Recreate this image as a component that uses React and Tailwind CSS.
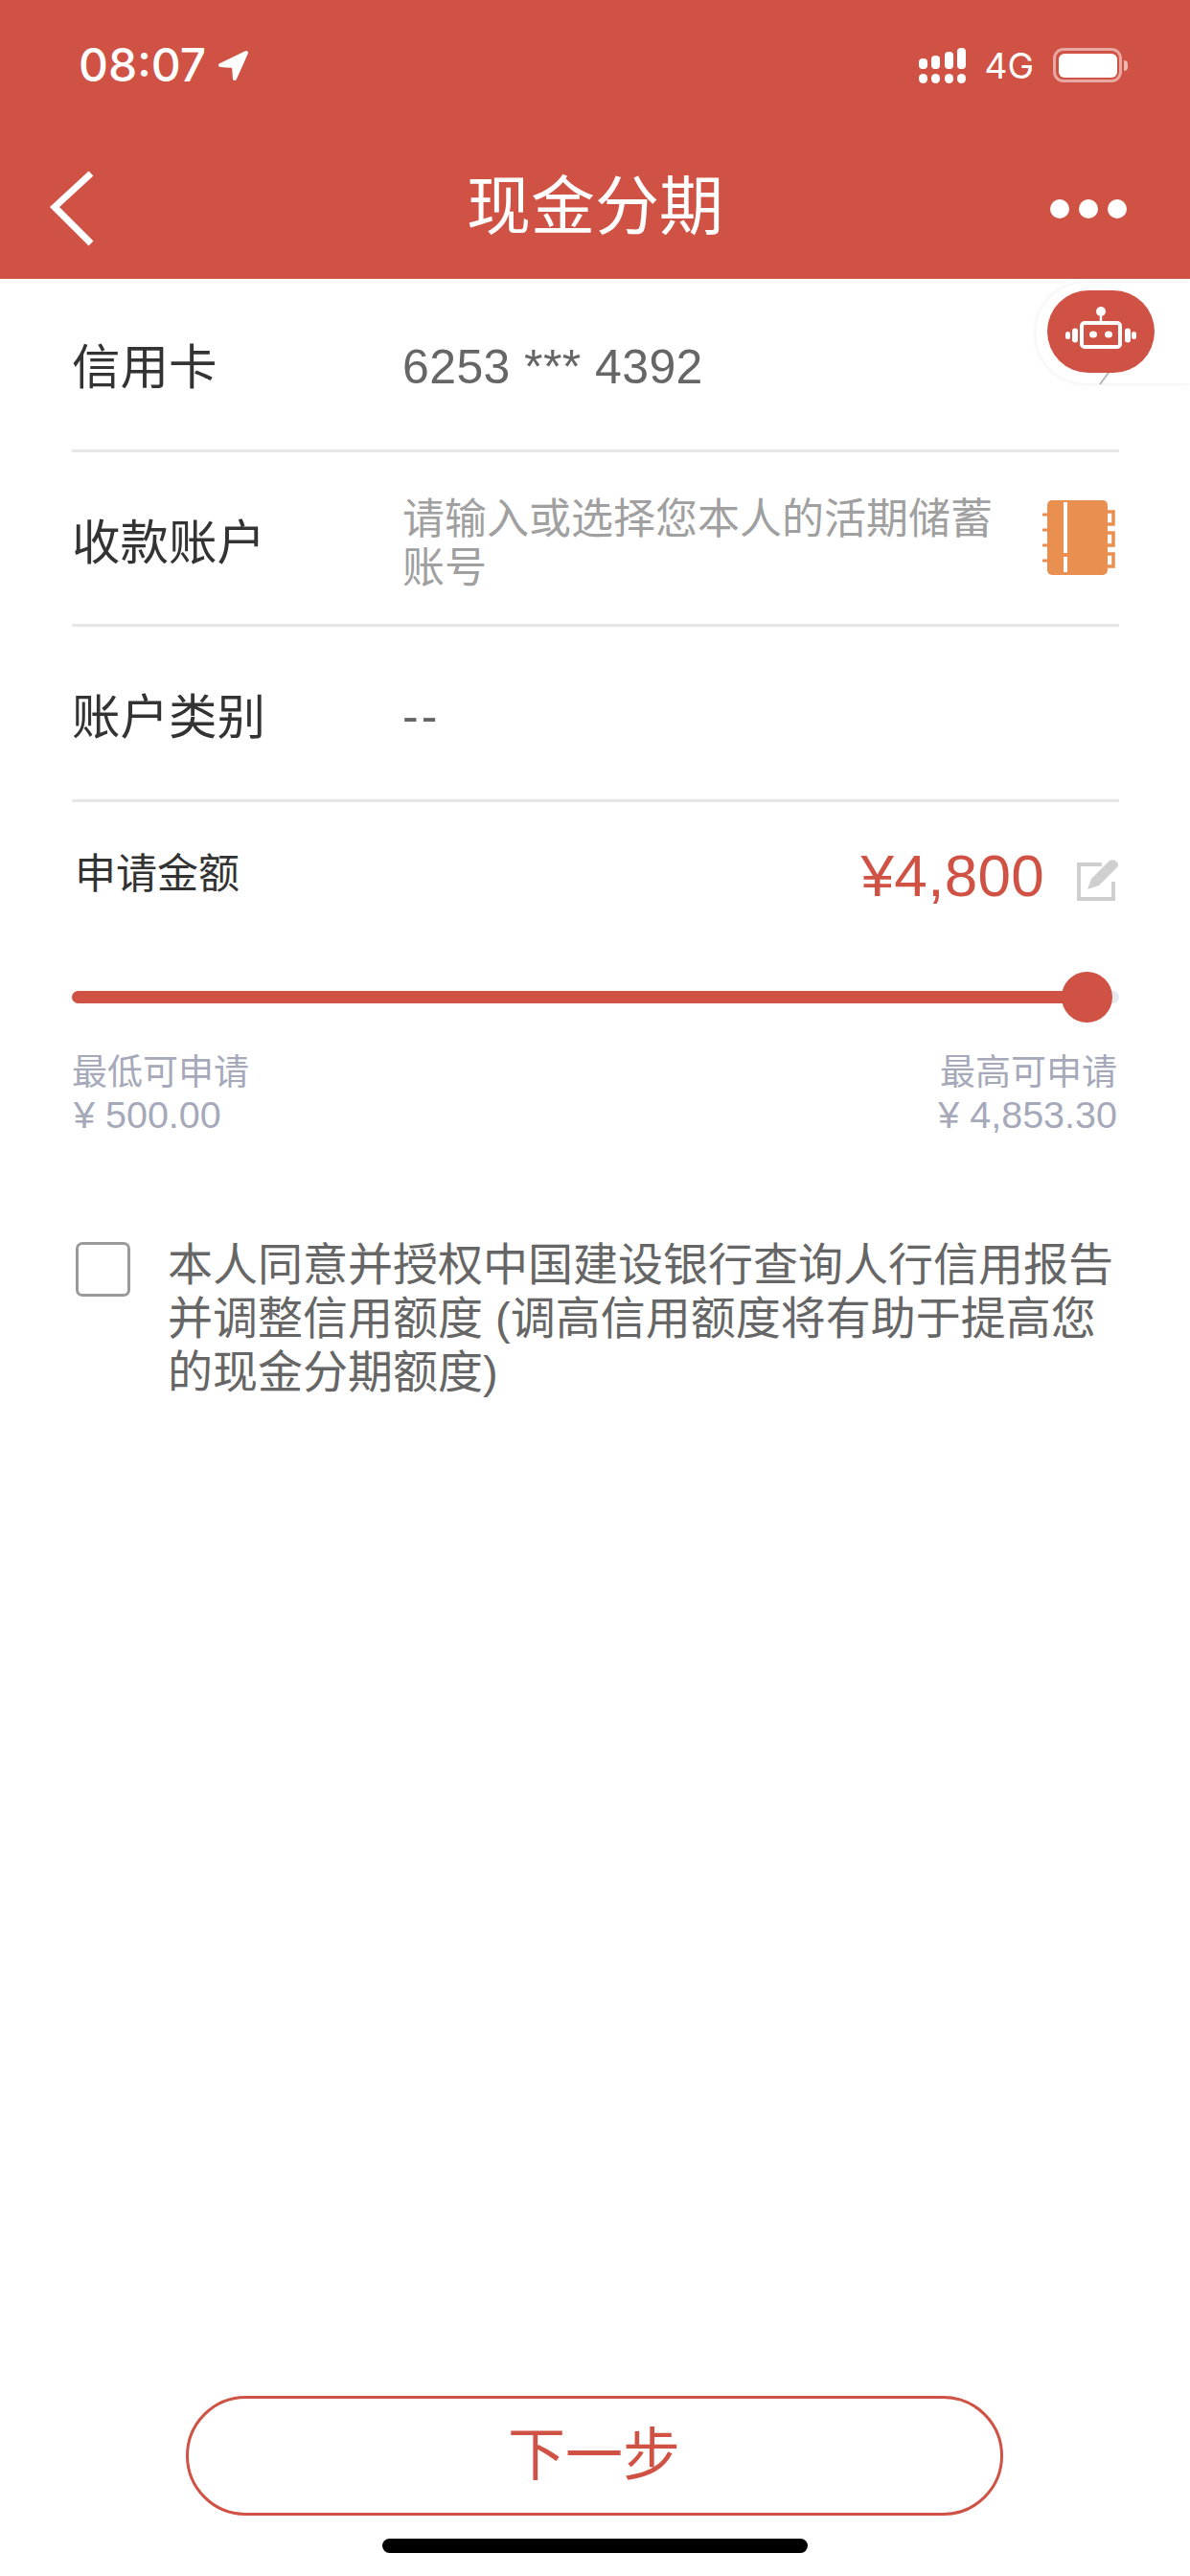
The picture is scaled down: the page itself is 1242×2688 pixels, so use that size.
const cjk = { fontFamily: '"Liberation Sans","Noto Sans CJK SC",sans-serif' };

function Signal() {
  const tops = [11, 14, 18, 22];
  return (
    <div className="flex items-end gap-[4.5px]">
      {tops.map((h, i) => (
        <div key={i} className="flex w-[9px] flex-col gap-[5px]">
          <div className="rounded-[4px] bg-white" style={{ height: h }} />
          <div className="h-[10px] rounded-full bg-white" />
        </div>
      ))}
    </div>
  );
}

function Battery() {
  return (
    <div className="flex items-center gap-[2px]">
      <div className="flex h-[36px] w-[72px] items-center justify-center rounded-[11px] border-[3px] border-white/50">
        <div className="h-[25px] w-[61px] rounded-[6px] bg-white" />
      </div>
      <div className="h-[11px] w-[4px] rounded-r-full bg-white/60" />
    </div>
  );
}

function Row({ label, children, right, h, labelClass, valueClass }) {
  return (
    <div className={`flex items-center border-b-[3px] border-[#e6e6e6] ${h}`}>
      <div className={`w-[345px] shrink-0 text-[50.5px] leading-none text-[#333333] ${labelClass}`}>{label}</div>
      <div className={`min-w-0 flex-1 ${valueClass}`}>{children}</div>
      {right}
    </div>
  );
}

function Robot() {
  return (
    <svg width="78" height="52" viewBox="0 0 78 52" fill="none" className="block">
      <circle cx="39" cy="5" r="5" fill="#fff" />
      <path d="M39 9v7" stroke="#fff" strokeWidth="2.5" />
      <rect x="19" y="17" width="40" height="25" rx="3" stroke="#fff" strokeWidth="4" />
      <ellipse cx="31" cy="29" rx="4" ry="3.5" fill="#fff" />
      <ellipse cx="47" cy="29" rx="4" ry="3.5" fill="#fff" />
      <rect x="9" y="22.5" width="6" height="15" rx="3" fill="#fff" />
      <rect x="2" y="26" width="5" height="8" rx="2.5" fill="#fff" />
      <rect x="64" y="22.5" width="6" height="15" rx="3" fill="#fff" />
      <rect x="71" y="26" width="5" height="8" rx="2.5" fill="#fff" />
    </svg>
  );
}

function Book() {
  return (
    <svg width="76" height="79" viewBox="0 0 76 79" fill="none" className="mr-[4px] block shrink-0">
      <rect x="5" y="0" width="63" height="78" rx="5" fill="#e98f50" />
      <path d="M24 2v53M24 59v16" stroke="#fff" strokeWidth="4" />
      <path d="M0 15h6M0 31h6M0 47h6M0 63h6" stroke="#e98f50" strokeWidth="3" />
      <path d="M68 12h6v13h-6M68 34h6v13h-6M68 56h6v13h-6" stroke="#e98f50" strokeWidth="3.5" />
    </svg>
  );
}

function EditIcon() {
  return (
    <svg width="44" height="44" viewBox="0 0 44 44" fill="none" className="block">
      <path d="M26 6H2v36h36V24" stroke="#cfcfcf" strokeWidth="4" />
      <path d="M11 32l4-11L34 2c2-1 4-1 6 0l3 3v3L23 28z" fill="#cfcfcf" />
    </svg>
  );
}

export default function App() {
  return (
    <div className="relative flex h-[2688px] w-[1242px] flex-col overflow-hidden bg-white" style={cjk}>
      <header className="h-[291px] shrink-0 bg-[#d05244] text-white">
        <div className="flex h-[136px] items-center pl-[82px] pr-[65px]">
          <span className="text-[48px] font-medium leading-none" style={{ fontFamily: 'Inter,sans-serif' }}>08:07</span>
          <svg width="33" height="33" viewBox="0 0 33 33" className="ml-[12px]">
            <path d="M30 3L3 16l14 1 1 13z" fill="#fff" stroke="#fff" strokeWidth="4" strokeLinejoin="round" />
          </svg>
          <div className="ml-auto flex items-center">
            <Signal />
            <span className="ml-[19px] mr-[20px] text-[37px] leading-none" style={{ fontFamily: 'Inter,sans-serif' }}>4G</span>
            <Battery />
          </div>
        </div>
        <div className="relative flex h-[155px] items-center justify-center">
          <svg width="50" height="82" viewBox="0 0 50 82" fill="none" className="absolute left-[51px] top-[41px]">
            <path d="M44 4L6 39l38 38" stroke="#fff" strokeWidth="7" />
          </svg>
          <span className="mt-[3px] text-[67px] leading-none">现金分期</span>
          <div className="absolute left-[1096px] top-[72px] flex gap-[10px]">
            <div className="h-[20px] w-[20px] rounded-full bg-white" />
            <div className="h-[20px] w-[20px] rounded-full bg-white" />
            <div className="h-[20px] w-[20px] rounded-full bg-white" />
          </div>
        </div>
      </header>

      <main className="mx-[75px] w-[1093px] flex-1">
        <Row label="信用卡" h="h-[181px]" labelClass="mt-[8px]" valueClass="mt-[5px]">
          <span className="text-[50px] leading-none tracking-[0.4px] text-[#666666]">6253 *** 4392</span>
        </Row>
        <Row label="收款账户" h="h-[182px]" labelClass="mt-[11px]" valueClass="mt-[11px]" right={<Book />}>
          <div className="w-[630px] text-[44px] leading-[51px] text-[#a0a0a0]">请输入或选择您本人的活期储蓄账号</div>
        </Row>
        <Row label="账户类别" h="h-[183px]" labelClass="mt-[11px]" valueClass="mt-[5px]">
          <span className="text-[50px] leading-none tracking-[3px] text-[#666666]">--</span>
        </Row>

        <section className="flex h-[150px] items-start justify-between">
          <div className="ml-[3px] mt-[54px] text-[43px] leading-none text-[#333333]">申请金额</div>
          <div className="mt-[46px] flex items-start">
            <span className="text-[62px] leading-none tracking-[0.3px] text-[#d05244]">¥4,800</span>
            <span className="ml-[34px] mt-[13px]"><EditIcon /></span>
          </div>
        </section>

        <div className="relative mt-[47px] h-[13px] rounded-full bg-[#e6e9ee]">
          <div className="h-full w-[1060px] rounded-full bg-[#d05244]" />
          <div className="absolute left-[1033px] top-[-20px] h-[53px] w-[53px] rounded-full bg-[#d05244]" />
        </div>

        <div className="mt-[53px] flex justify-between pr-[2px] text-[#a5a9b9]">
          <div>
            <div className="text-[37px] leading-[40px]">最低可申请</div>
            <div className="mt-[3px] pl-[2px] text-[39.5px] leading-[40px]">¥ 500.00</div>
          </div>
          <div className="text-right">
            <div className="text-[37px] leading-[40px]">最高可申请</div>
            <div className="mt-[3px] text-[39.5px] leading-[40px]">¥ 4,853.30</div>
          </div>
        </div>

        <div className="mt-[108px] flex items-start">
          <div className="ml-[4px] mt-[5px] h-[57px] w-[57px] shrink-0 rounded-[7px] border-[3px] border-[#9a9a9a]" />
          <div className="ml-[39px] mt-[1px] w-[995px] text-[47px] leading-[56px] text-[#666666]">
            本人同意并授权中国建设银行查询人行信用报告并调整信用额度 (调高信用额度将有助于提高您的现金分期额度)
          </div>
        </div>
      </main>

      <footer className="flex shrink-0 flex-col items-center pb-[24px]">
        <button className="flex h-[125px] w-[853px] -translate-x-px items-center justify-center rounded-full border-[3px] border-[#d05244] bg-white text-[60px] leading-none text-[#d05244]">
          下一步
        </button>
        <div className="mt-[24px] h-[15px] w-[444px] rounded-full bg-black" />
      </footer>

      <div className="absolute left-[1081px] top-[295px] h-[105px] w-[161px] rounded-l-[52px] bg-white shadow-[0_0_5px_rgba(0,0,0,0.09)]" />
      <svg width="16" height="18" viewBox="0 0 16 18" className="absolute left-[1146px] top-[385px]">
        <path d="M13 1L2 16" stroke="#b5b5b5" strokeWidth="2" />
      </svg>
      <div className="absolute left-[1093px] top-[303px] flex h-[86px] w-[112px] items-center justify-center rounded-[43px] bg-[#d05244]">
        <Robot />
      </div>
    </div>
  );
}
